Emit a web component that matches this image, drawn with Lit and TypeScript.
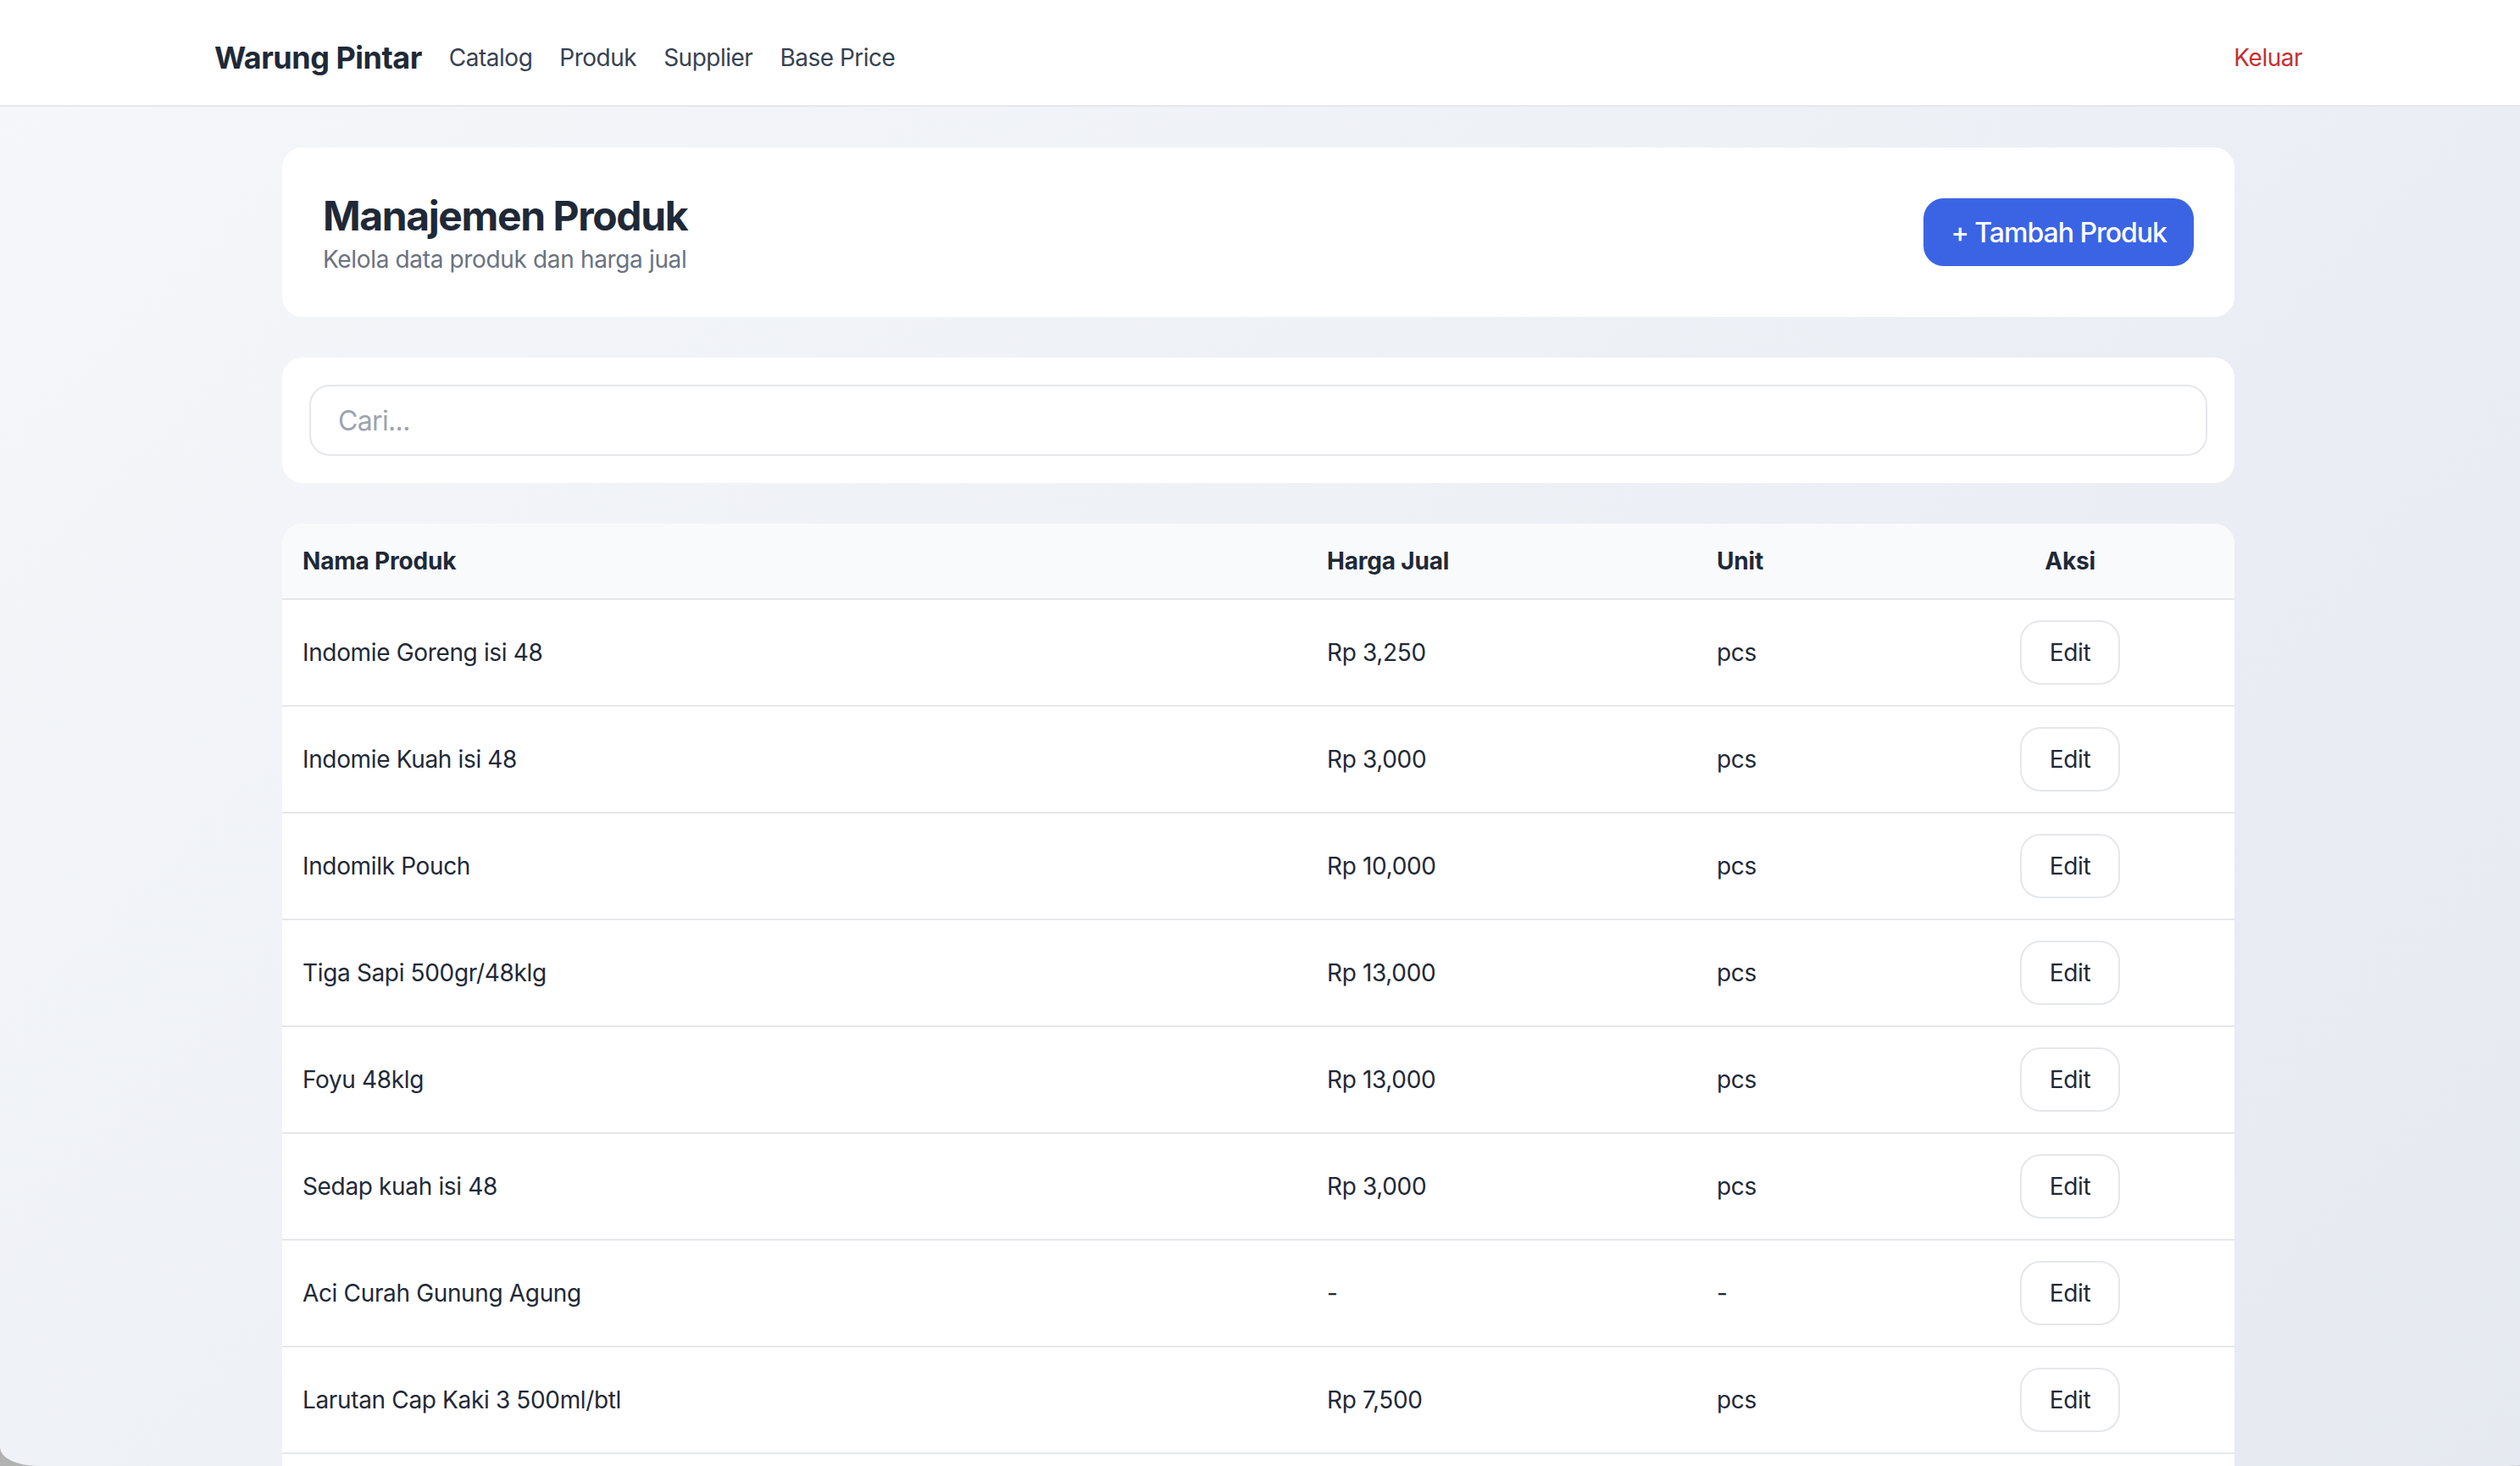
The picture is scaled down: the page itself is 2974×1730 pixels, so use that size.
import { LitElement, html, css } from 'lit';
import { customElement, state } from 'lit/decorators.js';

interface Product {
  name: string;
  price: string;
  unit: string;
}

const PRODUCTS: Product[] = [
  { name: 'Indomie Goreng isi 48', price: 'Rp 3,250', unit: 'pcs' },
  { name: 'Indomie Kuah isi 48', price: 'Rp 3,000', unit: 'pcs' },
  { name: 'Indomilk Pouch', price: 'Rp 10,000', unit: 'pcs' },
  { name: 'Tiga Sapi 500gr/48klg', price: 'Rp 13,000', unit: 'pcs' },
  { name: 'Foyu 48klg', price: 'Rp 13,000', unit: 'pcs' },
  { name: 'Sedap kuah isi 48', price: 'Rp 3,000', unit: 'pcs' },
  { name: 'Aci Curah Gunung Agung', price: '-', unit: '-' },
  { name: 'Larutan Cap Kaki 3 500ml/btl', price: 'Rp 7,500', unit: 'pcs' },
];

@customElement('app-root')
export class AppRoot extends LitElement {
  @state() private query = '';

  static styles = css`
    :host {
      display: block;
      height: 1730px;
      overflow: hidden;
      background: #b2b2b2;
      font-family: 'Inter', 'Liberation Sans', sans-serif;
      font-size: 28px;
      line-height: 40px;
      letter-spacing: -0.35px;
      color: #1f2937;
    }
    .window {
      height: 1730px;
      overflow: hidden;
      padding-right: 4px;
      box-sizing: border-box;
      border-radius: 0 0 28px 1px / 0 0 1px 1px;
      border-bottom-left-radius: 44px 22px;
      background: linear-gradient(135deg, #f5f7fa 0%, #e4e8f0 100%) 0 0 / 100% 2100px no-repeat;
    }
    /* ── Navbar ── */
    .topbar {
      margin-right: -4px;
      padding-right: 4px;
      background: #fff;
      border-bottom: 2px solid #e5e7eb;
    }
    .topbar-inner {
      box-sizing: border-box;
      width: 2560px;
      height: 124px;
      margin: 0 auto;
      padding: 12px 48px 0;
      display: flex;
      align-items: center;
      justify-content: space-between;
      letter-spacing: -0.5px;
    }
    .nav-left {
      display: flex;
      align-items: center;
      gap: 32px;
    }
    .brand {
      font-size: 36px;
      font-weight: 700;
      color: #1f2937;
    }
    .nav-link {
      color: #374151;
    }
    .logout {
      color: #c53030;
    }
    /* ── Page ── */
    main {
      box-sizing: border-box;
      width: 2304px;
      margin: 0 auto;
      padding-top: 48px;
      display: flex;
      flex-direction: column;
      gap: 48px;
    }
    .card {
      background: #fff;
      border-radius: 24px;
    }
    .page-head {
      padding: 48px;
      display: flex;
      align-items: center;
      justify-content: space-between;
    }
    h1 {
      margin: 0 0 -2px;
      font-size: 48px;
      line-height: 66px;
      font-weight: 700;
      letter-spacing: -1.4px;
      color: #1f2937;
    }
    .subtitle {
      color: #6b7280;
    }
    .primary {
      height: 80px;
      padding: 2px 32px 0;
      border: none;
      border-radius: 24px;
      background: #3b64e4;
      color: #fff;
      font: inherit;
      font-size: 32px;
      line-height: 48px;
      font-weight: 500;
      letter-spacing: -1px;
    }
    .search {
      padding: 32px;
    }
    input {
      display: block;
      box-sizing: border-box;
      width: 100%;
      height: 84px;
      padding: 16px 32px;
      border: 2px solid #e5e7eb;
      border-radius: 24px;
      font: inherit;
      font-size: 32px;
      line-height: 48px;
      letter-spacing: -0.65px;
      color: #1f2937;
      outline: none;
    }
    input::placeholder {
      color: #9ca3af;
    }
    .table-card {
      overflow: hidden;
    }
    table {
      width: 100%;
      table-layout: fixed;
      border-collapse: collapse;
    }
    .col-name { width: 1209px; }
    .col-price { width: 460px; }
    .col-unit { width: 247px; }
    th {
      height: 88px;
      padding: 0 24px;
      background: #f9fafb;
      border-bottom: 2px solid #e5e7eb;
      font-weight: 700;
      letter-spacing: -0.2px;
      text-align: left;
      color: #1f2937;
    }
    td {
      height: 124px;
      padding: 0 24px;
      border-bottom: 2px solid #e5e7eb;
    }
    .action {
      text-align: center;
    }
    .edit {
      box-sizing: border-box;
      width: 118px;
      height: 76px;
      padding: 0;
      border: 2px solid #e5e7eb;
      border-radius: 24px;
      background: #fff;
      font: inherit;
      letter-spacing: inherit;
      color: #1f2937;
    }
  `;

  render() {
    return html`
      <div class="window">
        <header class="topbar">
          <div class="topbar-inner">
            <nav class="nav-left">
              <span class="brand">Warung Pintar</span>
              <a class="nav-link">Catalog</a>
              <a class="nav-link">Produk</a>
              <a class="nav-link">Supplier</a>
              <a class="nav-link">Base Price</a>
            </nav>
            <a class="logout">Keluar</a>
          </div>
        </header>
        <main>
          <section class="card page-head">
            <div>
              <h1>Manajemen Produk</h1>
              <div class="subtitle">Kelola data produk dan harga jual</div>
            </div>
            <button class="primary">+ Tambah Produk</button>
          </section>
          <section class="card search">
            <input
              placeholder="Cari..."
              .value=${this.query}
              @input=${(e: Event) => {
                this.query = (e.target as HTMLInputElement).value;
              }}
            />
          </section>
          <section class="card table-card">
            <table>
              <colgroup>
                <col class="col-name" />
                <col class="col-price" />
                <col class="col-unit" />
                <col />
              </colgroup>
              <thead>
                <tr>
                  <th>Nama Produk</th>
                  <th>Harga Jual</th>
                  <th>Unit</th>
                  <th class="action">Aksi</th>
                </tr>
              </thead>
              <tbody>
                ${PRODUCTS.map(
                  (p) => html`
                    <tr>
                      <td>${p.name}</td>
                      <td>${p.price}</td>
                      <td>${p.unit}</td>
                      <td class="action"><button class="edit">Edit</button></td>
                    </tr>
                  `,
                )}
                <!-- next row is below the fold -->
                <tr><td colspan="4"></td></tr>
              </tbody>
            </table>
          </section>
        </main>
      </div>
    `;
  }
}
